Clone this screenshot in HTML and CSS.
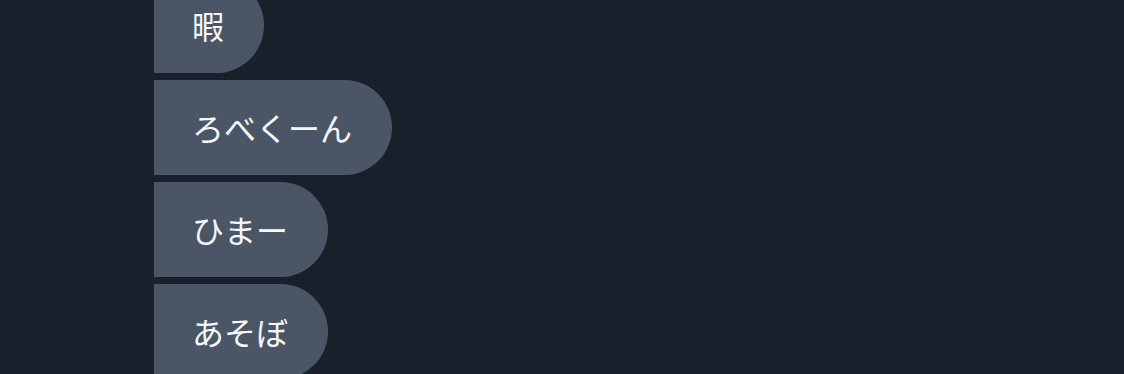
FILE: index.html
```html
<!DOCTYPE html>
<html lang="ja">
<head>
  <meta charset="UTF-8">
  <meta name="viewport" content="width=device-width, initial-scale=1.0">
  <title>Messages</title>
  <link rel="stylesheet" href="styles.css">
</head>
<body>
  <div class="thread">
    <div class="bubble">暇</div>
    <div class="bubble">ろべくーん</div>
    <div class="bubble">ひまー</div>
    <div class="bubble">あそぼ</div>
  </div>
</body>
</html>
```

FILE: styles.css
```css
html, body {
  height: 100%;
}

body {
  margin: 0;
  background-color: #19202b;
  font-family: "Noto Sans CJK JP", "Noto Sans", sans-serif;
  overflow: hidden;
}

.thread {
  display: flex;
  flex-direction: column;
  align-items: flex-start;
  gap: 7px;
  padding-left: 154px;
  margin-top: -22px;
}

.bubble {
  background-color: #4a5666;
  color: #f4f6f8;
  font-size: 32px;
  line-height: 47px;
  padding: 24px 40px 24px 38px;
  border-radius: 0 48px 48px 0;
}
```
